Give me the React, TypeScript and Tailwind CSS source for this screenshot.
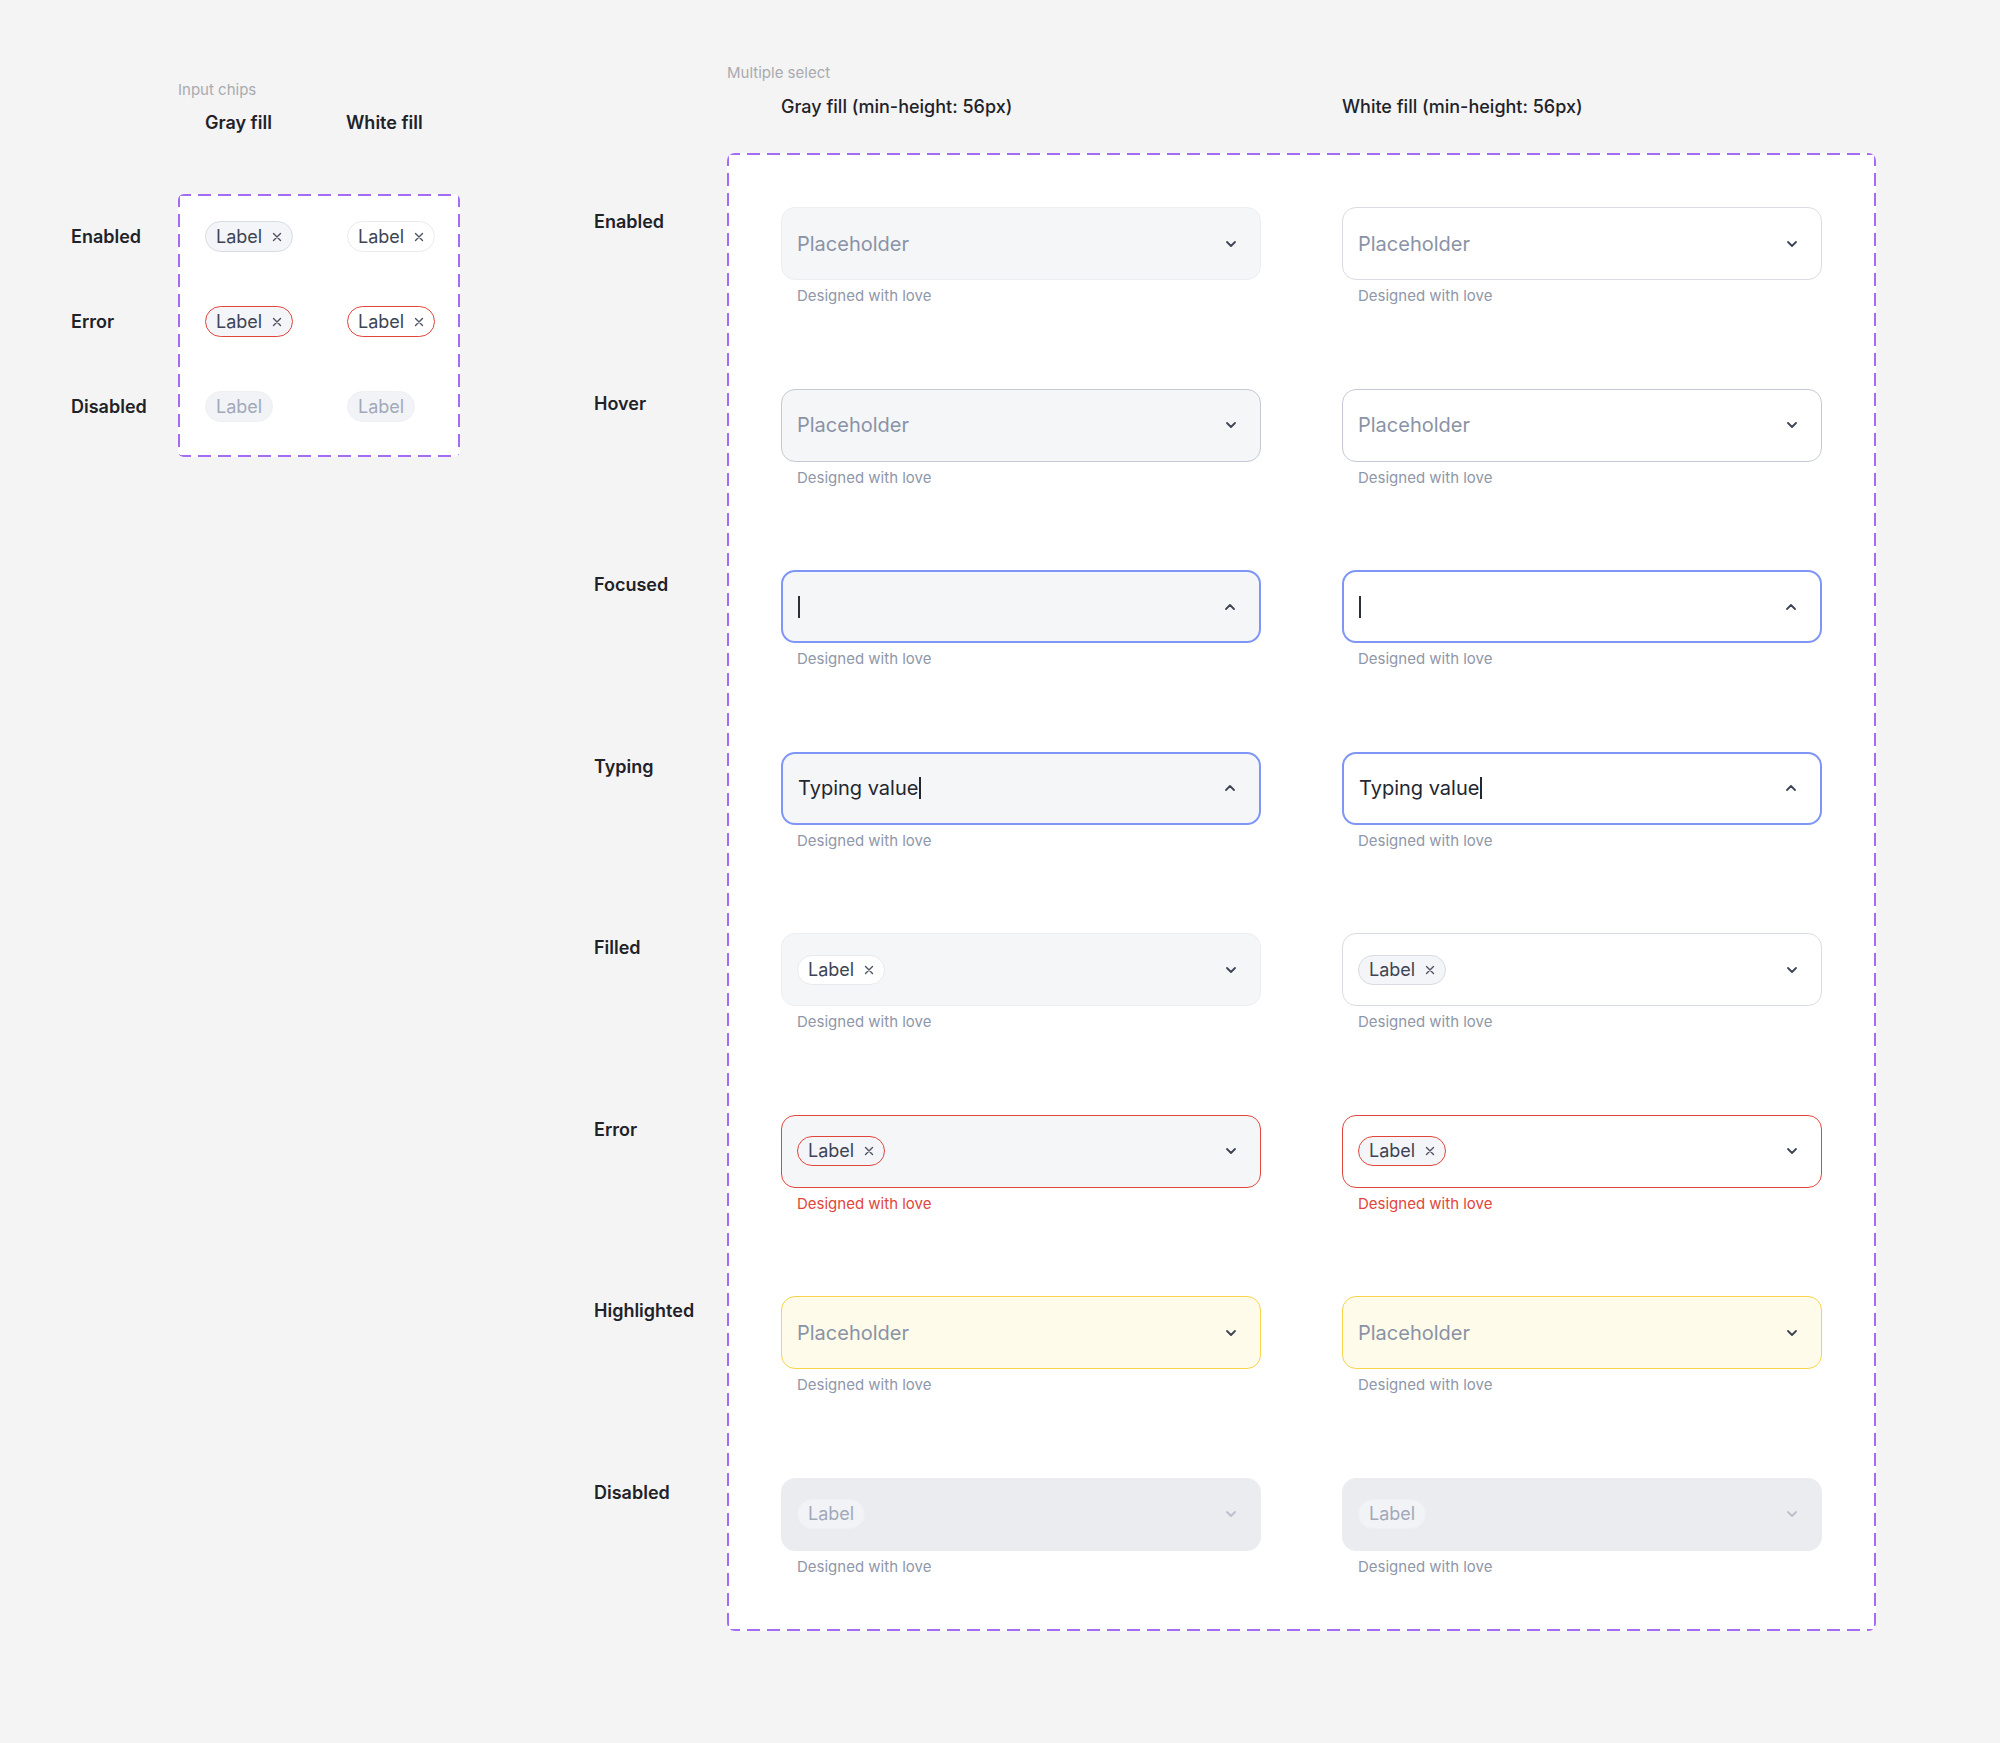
import React from "react";

type Fill = "gray" | "white";
type SelectState =
  | "enabled"
  | "hover"
  | "focused"
  | "typing"
  | "filled"
  | "error"
  | "highlighted"
  | "disabled";

const selectRows: { label: string; state: SelectState }[] = [
  { label: "Enabled", state: "enabled" },
  { label: "Hover", state: "hover" },
  { label: "Focused", state: "focused" },
  { label: "Typing", state: "typing" },
  { label: "Filled", state: "filled" },
  { label: "Error", state: "error" },
  { label: "Highlighted", state: "highlighted" },
  { label: "Disabled", state: "disabled" },
];

const chipRows = [
  { label: "Enabled", error: false, disabled: false },
  { label: "Error", error: true, disabled: false },
  { label: "Disabled", error: false, disabled: true },
];

// long purple dashes, like the design tool's frame outline
const dashedFrame =
  "bg-white [background-image:linear-gradient(90deg,#a46cf5_64%,transparent_64%),linear-gradient(90deg,#a46cf5_64%,transparent_64%),linear-gradient(180deg,#a46cf5_64%,transparent_64%),linear-gradient(180deg,#a46cf5_64%,transparent_64%)] [background-size:20px_2px,20px_2px,2px_20px,2px_20px] [background-position:0_0,0_100%,0_0,100%_0] [background-repeat:repeat-x,repeat-x,repeat-y,repeat-y]";

const CloseIcon = () => (
  <svg width="10" height="10" viewBox="0 0 10 10" fill="none">
    <path d="M1.5 1.5l7 7M8.5 1.5l-7 7" stroke="#4a5162" strokeWidth="1.4" strokeLinecap="round" />
  </svg>
);

const Chevron = ({ up, muted }: { up?: boolean; muted?: boolean }) => (
  <svg width="12" height="8" viewBox="0 0 12 8" fill="none" className="ml-auto shrink-0">
    <path
      d={up ? "M2 6l4-4 4 4" : "M2 2l4 4 4-4"}
      stroke={muted ? "#b9bfcb" : "#3d4453"}
      strokeWidth="1.8"
      strokeLinecap="round"
      strokeLinejoin="round"
    />
  </svg>
);

interface ChipProps {
  fill: Fill;
  error?: boolean;
  disabled?: boolean;
  tall?: boolean;
}

function Chip({ fill, error, disabled, tall }: ChipProps) {
  const h = tall ? "h-[31px]" : "h-[30px]";
  if (disabled) {
    return (
      <span
        className={`inline-flex items-center rounded-full border border-[#eef0f3] bg-[#f2f3f6] px-[10px] text-[18px] leading-none text-[#a2a9b9] ${h}`}
      >
        Label
      </span>
    );
  }
  const fillCls = fill === "gray" ? "bg-[#f4f5f8]" : "bg-white";
  const borderCls = error
    ? "border-[1.5px] border-[#e1463b]"
    : fill === "gray"
    ? "border border-[#d8dbe2]"
    : "border border-[#e8eaee]";
  return (
    <span
      className={`inline-flex items-center gap-[10px] rounded-full pl-[10px] pr-[10px] text-[18px] leading-none text-[#3e4454] ${h} ${fillCls} ${borderCls}`}
    >
      Label
      <CloseIcon />
    </span>
  );
}

function boxClasses(fill: Fill, state: SelectState) {
  const bg = fill === "gray" ? "bg-[#f5f6f8]" : "bg-white";
  switch (state) {
    case "hover":
      return `${bg} border-[1.5px] border-[#c4c9d3]`;
    case "focused":
    case "typing":
      return `${bg} border-2 border-[#7f96f6]`;
    case "error":
      return `${bg} border-[1.5px] border-[#e1463b]`;
    case "highlighted":
      return "bg-[#fefbea] border-[1.5px] border-[#f6d44c]";
    case "disabled":
      return "bg-[#ebecf0] border border-[#ebecf0]";
    default:
      return fill === "gray"
        ? `${bg} border border-[#eceef2]`
        : `${bg} border border-[#d9dce3]`;
  }
}

function MultiSelect({ fill, state }: { fill: Fill; state: SelectState }) {
  let content: React.ReactNode;
  if (state === "focused") {
    content = <span className="h-[22px] w-[2px] bg-[#2b2f38]" />;
  } else if (state === "typing") {
    content = (
      <span className="flex items-center text-[20px] text-[#23272f]">
        Typing value
        <span className="ml-[1px] h-[22px] w-[1.5px] bg-[#23272f]" />
      </span>
    );
  } else if (state === "filled") {
    // chip takes the opposite fill so it stands out from the field
    content = <Chip fill={fill === "gray" ? "white" : "gray"} />;
  } else if (state === "error") {
    content = <Chip fill="gray" error />;
  } else if (state === "disabled") {
    content = <Chip fill="gray" disabled />;
  } else {
    content = <span className="text-[20px] text-[#8a93a6]">Placeholder</span>;
  }

  return (
    <div>
      <div
        className={`flex h-[73px] items-center rounded-[14px] pl-[15px] pr-[23px] ${boxClasses(fill, state)}`}
      >
        {content}
        <Chevron up={state === "focused" || state === "typing"} muted={state === "disabled"} />
      </div>
      <div
        className={`mt-[6px] pl-[16px] text-[15px] leading-[20px] ${
          state === "error" ? "text-[#e1463b]" : "text-[#8f97a9]"
        }`}
      >
        Designed with love
      </div>
    </div>
  );
}

function InputChips() {
  return (
    <section className="ml-[71px] mt-[81px] shrink-0">
      <div className="pl-[107px]">
        <div className="text-[15px] leading-[18px] text-[#a9abb0]">Input chips</div>
        <div className="mt-[13px] flex pl-[27px] text-[18px] font-semibold leading-[22px] text-[#1f2329]">
          <div className="w-[141px]">Gray fill</div>
          <div>White fill</div>
        </div>
      </div>
      <div className="mt-[60px] flex">
        <div className="flex w-[107px] flex-col gap-[54px] pt-[27px]">
          {chipRows.map((r) => (
            <div
              key={r.label}
              className="flex h-[31px] items-center text-[18px] font-semibold text-[#1f2329]"
            >
              {r.label}
            </div>
          ))}
        </div>
        <div className={`w-[282px] rounded-[6px] pb-[35px] pl-[27px] pt-[27px] ${dashedFrame}`}>
          <div className="grid grid-cols-[142px_1fr] gap-y-[54px]">
            {chipRows.map((r) => (
              <React.Fragment key={r.label}>
                <div className="flex h-[31px] items-center">
                  <Chip fill="gray" error={r.error} disabled={r.disabled} tall />
                </div>
                <div className="flex h-[31px] items-center">
                  <Chip fill="white" error={r.error} disabled={r.disabled} tall />
                </div>
              </React.Fragment>
            ))}
          </div>
        </div>
      </div>
    </section>
  );
}

function MultipleSelect() {
  return (
    <section className="ml-[134px] mt-[64px] shrink-0">
      <div className="pl-[133px]">
        <div className="text-[15px] leading-[18px] text-[#a9abb0]">Multiple select</div>
        <div className="mt-[14px] flex pl-[54px] text-[18px] font-medium leading-[22px] text-[#1f2329]">
          <div className="w-[561px]">Gray fill (min-height: 56px)</div>
          <div>White fill (min-height: 56px)</div>
        </div>
      </div>
      <div className="mt-[35px] flex">
        <div className="flex w-[133px] flex-col gap-[82.5px] pt-[58px]">
          {selectRows.map((r) => (
            <div
              key={r.label}
              className="h-[99px] text-[18px] font-semibold leading-[22px] text-[#1f2329]"
            >
              {r.label}
            </div>
          ))}
        </div>
        <div className={`w-[1149px] rounded-[8px] pb-[54px] pl-[54px] pt-[54px] ${dashedFrame}`}>
          <div className="grid grid-cols-[480px_480px] gap-x-[81px] gap-y-[82.5px]">
            {selectRows.map((r) => (
              <React.Fragment key={r.label}>
                <MultiSelect fill="gray" state={r.state} />
                <MultiSelect fill="white" state={r.state} />
              </React.Fragment>
            ))}
          </div>
        </div>
      </div>
    </section>
  );
}

export default function App() {
  return (
    <div
      className="flex min-h-[1743px] w-full items-start bg-[#f4f4f4]"
      style={{ fontFamily: "Inter, 'Noto Sans', sans-serif" }}
    >
      <InputChips />
      <MultipleSelect />
    </div>
  );
}
